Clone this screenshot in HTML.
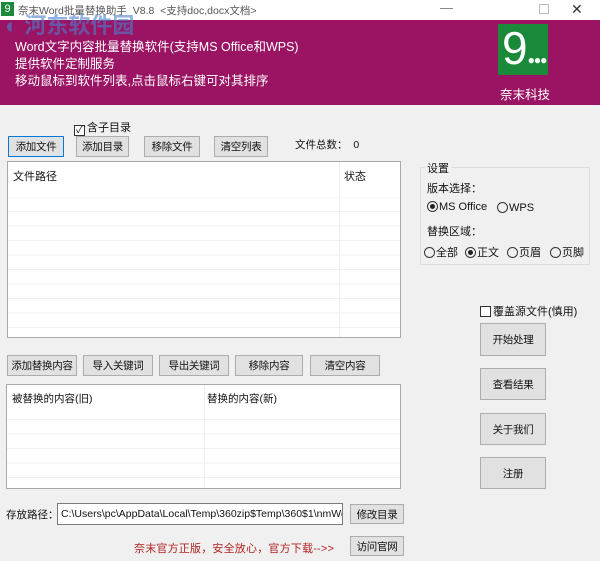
<!DOCTYPE html>
<html><head><meta charset="utf-8"><style>
*{margin:0;padding:0;box-sizing:border-box}
body{width:600px;height:561px;background:#f0f0f0;position:relative;overflow:hidden;font-family:"Liberation Sans","Noto Sans CJK SC",sans-serif;font-size:11px;color:#111}
.a{position:absolute;white-space:nowrap}
.btn{position:absolute;background:#e1e1e1;border:1px solid #adadad;text-align:center;font-size:10.5px;display:flex;align-items:center;justify-content:center;white-space:nowrap;letter-spacing:-0.3px}
.tbl{position:absolute;background:#fff;border:1px solid #a8a8a8;overflow:hidden}
.rad{display:inline-block;width:11px;height:11px;border:1px solid #333;border-radius:50%;vertical-align:-2px;margin-right:1px;position:relative}
.rad.on:after{content:"";position:absolute;left:2px;top:2px;width:5px;height:5px;border-radius:50%;background:#222}
.chk{display:inline-block;width:11px;height:11px;border:1px solid #333;background:#fff;vertical-align:-2px;margin-right:2px}
</style></head><body>
<div class="a" style="left:0;top:0;width:600px;height:20px;background:#fff"></div>
<div class="a" style="left:1px;top:2px;width:13px;height:14px;background:#1a8a3a;color:#fff;font-size:11px;text-align:center;line-height:14px">9</div>
<div class="a" style="left:18px;top:3px;color:#555;font-size:10.5px">奈末Word批量替换助手 &nbsp;V8.8 &nbsp;&lt;支持doc,docx文档&gt;</div>
<div class="a" style="left:440px;top:0px;color:#777;font-size:13px">—</div>
<div class="a" style="left:539px;top:4px;width:10px;height:10px;border:1px solid #bbb"></div>
<div class="a" style="left:571px;top:1px;color:#333;font-size:14px">✕</div>
<div class="a" style="left:0;top:20px;width:600px;height:85px;background:#9b1464"></div>
<div class="a" style="left:5px;top:8px;color:#4a7fd0;opacity:.6;font-size:22px;font-weight:bold">◐ 河东软件园</div>
<div class="a" style="left:15px;top:36px;color:#fff;font-size:12.5px">Word文字内容批量替换软件(支持MS Office和WPS)</div>
<div class="a" style="left:15px;top:53px;color:#fff;font-size:12.5px">提供软件定制服务</div>
<div class="a" style="left:15px;top:70px;color:#fff;font-size:12.5px">移动鼠标到软件列表,点击鼠标右键可对其排序</div>
<div class="a" style="left:498px;top:24px;width:50px;height:51px;background:#1a8a3a;color:#fff;font-size:46px;line-height:48px;padding-left:4px">9<span style="font-size:12px;letter-spacing:-1px">●●●</span></div>
<div class="a" style="left:500px;top:84px;color:#fff;font-size:12.5px">奈末科技</div>

<div class="a" style="left:74px;top:119px"><span class="chk" style="text-align:center;line-height:9px;font-size:10px">✓</span>含子目录</div>
<div class="btn" style="left:8px;top:136px;width:56px;height:21px;border-color:#0078d7">添加文件</div>
<div class="btn" style="left:76px;top:136px;width:53px;height:21px">添加目录</div>
<div class="btn" style="left:144px;top:136px;width:56px;height:21px">移除文件</div>
<div class="btn" style="left:214px;top:136px;width:54px;height:21px">清空列表</div>
<div class="a" style="left:295px;top:137px;font-size:10.5px">文件总数： &nbsp;0</div>

<div class="tbl" style="left:7px;top:161px;width:394px;height:177px;background:#fff repeating-linear-gradient(#fff 0,#fff 13.5px,#f0f0f0 13.5px,#f0f0f0 14.5px);background-position:0 21px">
<div class="a" style="left:0;top:0;width:392px;height:35px;background:#fff"></div>
<div class="a" style="left:331px;top:0;width:1px;height:177px;background:#eee"></div>
<div class="a" style="left:5px;top:6px">文件路径</div><div class="a" style="left:336px;top:6px">状态</div></div>

<div class="a" style="left:420px;top:167px;width:170px;height:98px;border:1px solid #dcdcdc"></div>
<div class="a" style="left:425px;top:160px;background:#f0f0f0;padding:0 2px">设置</div>
<div class="a" style="left:427px;top:180px">版本选择：</div>
<div class="a" style="left:427px;top:201px"><span class="rad on"></span>MS Office</div>
<div class="a" style="left:497px;top:202px"><span class="rad"></span>WPS</div>
<div class="a" style="left:427px;top:223px">替换区域：</div>
<div class="a" style="left:424px;top:244px"><span class="rad"></span>全部</div>
<div class="a" style="left:465px;top:244px"><span class="rad on"></span>正文</div>
<div class="a" style="left:507px;top:244px"><span class="rad"></span>页眉</div>
<div class="a" style="left:550px;top:244px"><span class="rad"></span>页脚</div>

<div class="a" style="left:480px;top:303px"><span class="chk"></span>覆盖源文件(慎用)</div>
<div class="btn" style="left:480px;top:323px;width:66px;height:33px">开始处理</div>
<div class="btn" style="left:480px;top:368px;width:66px;height:32px">查看结果</div>
<div class="btn" style="left:480px;top:413px;width:66px;height:32px">关于我们</div>
<div class="btn" style="left:480px;top:457px;width:66px;height:32px">注册</div>

<div class="btn" style="left:7px;top:355px;width:70px;height:21px">添加替换内容</div>
<div class="btn" style="left:83px;top:355px;width:70px;height:21px">导入关键词</div>
<div class="btn" style="left:159px;top:355px;width:70px;height:21px">导出关键词</div>
<div class="btn" style="left:235px;top:355px;width:68px;height:21px">移除内容</div>
<div class="btn" style="left:310px;top:355px;width:70px;height:21px">清空内容</div>

<div class="tbl" style="left:6px;top:384px;width:395px;height:105px;background:#fff repeating-linear-gradient(#fff 0,#fff 13.5px,#f0f0f0 13.5px,#f0f0f0 14.5px);background-position:0 6px">
<div class="a" style="left:0;top:0;width:393px;height:34px;background:#fff"></div>
<div class="a" style="left:197px;top:0;width:1px;height:105px;background:#eee"></div>
<div class="a" style="left:5px;top:6px;font-size:10.5px">被替换的内容(旧)</div><div class="a" style="left:200px;top:6px;font-size:10.5px">替换的内容(新)</div></div>

<div class="a" style="left:6px;top:507px;font-size:10.5px">存放路径：</div>
<div class="a" style="left:57px;top:503px;width:286px;height:22px;background:#fff;border:1px solid #7a7a7a;padding:4px 0 0 3px;overflow:hidden;font-size:10.5px">C:\Users\pc\AppData\Local\Temp\360zip$Temp\360$1\nmWor</div>
<div class="btn" style="left:350px;top:504px;width:54px;height:20px">修改目录</div>
<div class="a" style="left:134px;top:540px;color:#b22222;font-size:11px;letter-spacing:0.2px">奈末官方正版，安全放心，官方下载--&gt;&gt;</div>
<div class="btn" style="left:350px;top:536px;width:54px;height:20px">访问官网</div>
</body></html>
